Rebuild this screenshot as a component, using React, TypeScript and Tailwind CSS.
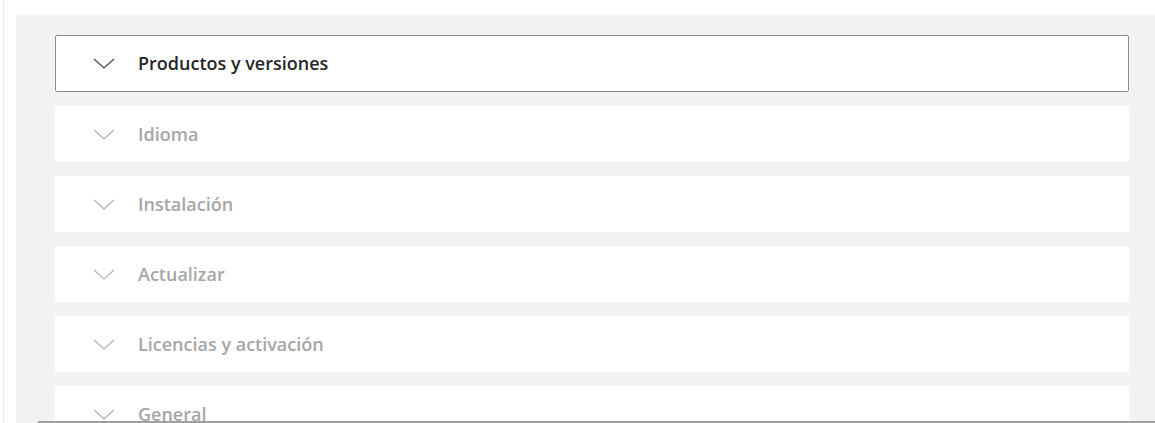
import { useState } from "react";

const SECTIONS = [
  "Productos y versiones",
  "Idioma",
  "Instalación",
  "Actualizar",
  "Licencias y activación",
  "General",
];

function Chevron({ active }: { active: boolean }) {
  return (
    <svg
      width="22"
      height="11"
      viewBox="0 0 22 11"
      fill="none"
      className={active ? "text-[#4a4a4a]" : "text-[#b3b3b3]"}
    >
      <path d="M1 1l10 9 10-9" stroke="currentColor" strokeWidth="1.3" />
    </svg>
  );
}

export default function App() {
  const [open, setOpen] = useState(0);

  return (
    <div className="relative h-[423px] overflow-hidden bg-white font-['Open_Sans',sans-serif]">
      <div className="absolute left-[3px] top-0 bottom-0 w-px bg-[#ececec]" />
      <div className="ml-4 mt-[15px] h-[408px] bg-[#f2f2f2] pl-[39px] pr-[26px] pt-5">
        <div className="flex flex-col gap-[14px]">
          {SECTIONS.map((s, i) => {
            const active = i === open;
            return (
              <button
                key={s}
                type="button"
                onClick={() => setOpen(i)}
                className={
                  active
                    ? "flex h-[57px] items-center gap-[23px] rounded-[2px] border border-[#8a8a8a] bg-white pl-[37px] text-left"
                    : "flex h-[56px] items-center gap-[23px] bg-white pl-[38px] text-left"
                }
              >
                <Chevron active={active} />
                <span
                  className={
                    active
                      ? "text-[18px] font-semibold text-[#262626]"
                      : "text-[18px] font-semibold text-[#a6a6a6]"
                  }
                >
                  {s}
                </span>
              </button>
            );
          })}
        </div>
      </div>
      <div className="absolute bottom-0 left-[38px] right-0 h-[2px] bg-[#a0a0a0]" />
    </div>
  );
}
